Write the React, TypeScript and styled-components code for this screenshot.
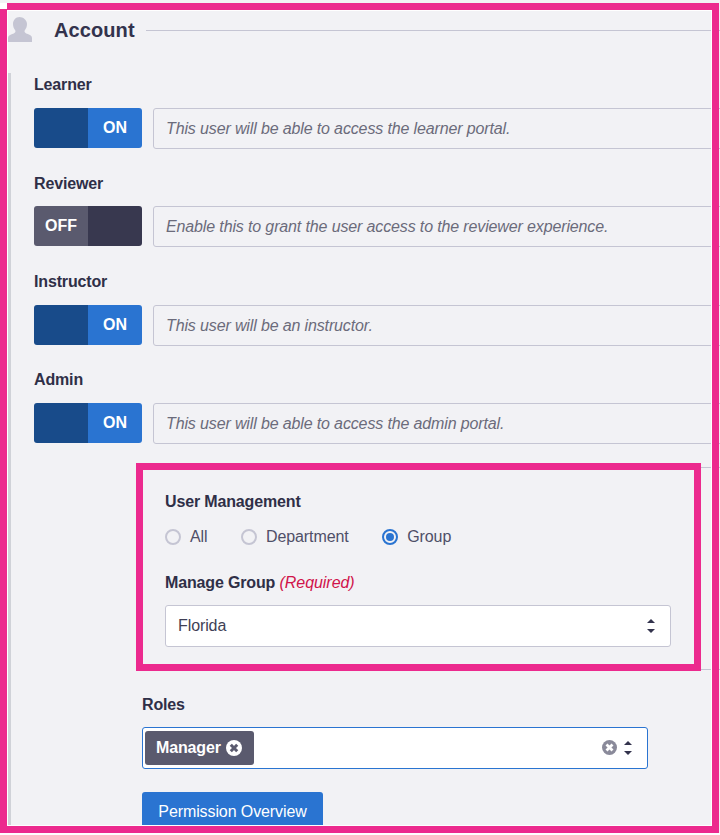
import styled, { createGlobalStyle } from "styled-components";

const GlobalStyle = createGlobalStyle`
  html, body {
    margin: 0;
    padding: 0;
    background: #fff;
    font-family: "Liberation Sans", Arial, sans-serif;
  }
`;

const Page = styled.div`
  position: relative;
  box-sizing: border-box;
  width: 720px;
  height: 833px;
  overflow: hidden;
  display: flex;
  flex-direction: column;
  padding: 17px 0 0 8px;
  background: #f2f2f5;
  font-size: 16px;
  color: #2f2f47;
`;

const SectionHeader = styled.div`
  display: flex;
  align-items: center;
  height: 27px;
  flex-shrink: 0;
`;

const UserIcon = styled.svg`
  width: 24px;
  height: 25px;
  align-self: flex-start;
  fill: #c5c5d3;
`;

const SectionTitle = styled.h2`
  margin: 0 11px 0 22px;
  font-size: 20px;
  line-height: 27px;
  font-weight: 700;
  letter-spacing: 0.1px;
  color: #33334d;
`;

const HeaderRule = styled.div`
  flex: 1;
  height: 1px;
  background: #c5c5d3;
`;

const Section = styled.div`
  flex: 1;
  margin-top: 29px;
  padding: 1.2px 0 0 23px;
  border-left: 3px solid #d0d2d8;
`;

const Label = styled.div`
  font-size: 16px;
  line-height: 22px;
  font-weight: 700;
  letter-spacing: -0.15px;
  color: #2f2f47;
  margin-bottom: 11.8px;
`;

const Required = styled.span`
  font-weight: 400;
  font-style: italic;
  letter-spacing: -0.05px;
  color: #d0134a;
`;

const FieldRow = styled.div`
  display: flex;
  gap: 11px;
  height: 41px;
  margin: 0 -10px 23.53px 0;
`;

const Toggle = styled.div`
  display: grid;
  grid-template-columns: 54px 54px;
  height: 40px;
  flex-shrink: 0;
  border-radius: 3px;
  overflow: hidden;
`;

const ToggleSide = styled.div<{ $color: string }>`
  display: flex;
  align-items: center;
  justify-content: center;
  background: ${(p) => p.$color};
  color: #fff;
  font-weight: 700;
  font-size: 16px;
`;

const Hint = styled.div`
  flex: 1;
  display: flex;
  align-items: center;
  box-sizing: border-box;
  padding: 0.8px 12px 0;
  border: 1px solid #c5c5d3;
  border-radius: 3px;
  font-style: italic;
  letter-spacing: -0.135px;
  color: #6b6b7b;
`;

const Panel = styled.div`
  margin: -0.53px -10px 0 108px;
  padding: 23px 0 22px 23px;
  border-top: 1px solid #c5c5d3;
  border-bottom: 1px solid #c5c5d3;
`;

const RadioGroup = styled.div`
  display: flex;
  align-items: center;
  gap: 33.4px;
  height: 22px;
  margin: 13px 0 24px;
`;

const RadioOption = styled.label`
  display: flex;
  align-items: center;
  gap: 9px;
  letter-spacing: -0.08px;
  color: #4f4f68;
`;

const RadioMark = styled.span<{ $checked?: boolean }>`
  display: flex;
  align-items: center;
  justify-content: center;
  box-sizing: border-box;
  width: 16px;
  height: 16px;
  border-radius: 50%;
  border: 2px solid ${(p) => (p.$checked ? "#2a74d1" : "#c5c5d3")};

  &::after {
    content: "";
    display: ${(p) => (p.$checked ? "block" : "none")};
    width: 8px;
    height: 8px;
    border-radius: 50%;
    background: #2a74d1;
  }
`;

const SelectBox = styled.div`
  display: flex;
  align-items: center;
  justify-content: space-between;
  box-sizing: border-box;
  width: 506px;
  height: 42px;
  margin-top: -0.8px;
  padding: 0 15px 0 12px;
  background: #fff;
  border: 1px solid #c5c5d3;
  border-radius: 3px;
  letter-spacing: -0.1px;
  color: #3f3f55;
`;

const RolesField = styled.div`
  margin: 24px 0 0 108px;
`;

const MultiBox = styled.div`
  display: flex;
  align-items: center;
  justify-content: space-between;
  box-sizing: border-box;
  width: 506px;
  height: 42px;
  margin-top: -0.8px;
  padding: 0 15px 0 2px;
  background: #fff;
  border: 1px solid #2a74d1;
  border-radius: 3px;
`;

const Chip = styled.div`
  display: flex;
  align-items: center;
  gap: 5px;
  height: 34px;
  padding: 0 12px 0 11px;
  background: #5a5a6e;
  border-radius: 3px;
  color: #fff;
  font-weight: 700;
  letter-spacing: -0.15px;
`;

const MultiControls = styled.div`
  display: flex;
  align-items: center;
  gap: 7px;
`;

const Chevrons = styled.svg`
  display: block;
  width: 8px;
  height: 14px;
  fill: #33334d;
`;

const Button = styled.button`
  display: block;
  box-sizing: border-box;
  width: 181px;
  height: 40px;
  margin-top: 23px;
  padding: 0;
  border: 0;
  border-radius: 3px;
  background: #2a74d1;
  color: #fff;
  font: 400 16px "Liberation Sans", Arial, sans-serif;
  letter-spacing: -0.1px;
`;

const Highlight = styled.div`
  position: absolute;
  box-sizing: border-box;
  border: 7px solid #ec2a8e;
  pointer-events: none;
`;

const OuterHighlight = styled(Highlight)`
  left: 0;
  top: 3px;
  width: 719px;
  height: 830px;
  box-shadow: inset 0 0 0 1px #fff;

  &::before {
    content: "";
    position: absolute;
    left: -7px;
    top: -7px;
    width: 7px;
    height: 6px;
    background: #fff;
  }
`;

const InnerHighlight = styled(Highlight)`
  left: 136px;
  top: 463px;
  width: 565px;
  height: 208px;
`;

const ClearIcon = ({ fill, stroke, size }: { fill: string; stroke: string; size: number }) => (
  <svg width={size} height={size} viewBox="0 0 16 16" style={{ display: "block" }}>
    <circle cx="8" cy="8" r="8" fill={fill} />
    <path d="M4.8 4.8l6.4 6.4M11.2 4.8l-6.4 6.4" stroke={stroke} strokeWidth="3" fill="none" />
  </svg>
);

const UpDown = () => (
  <Chevrons viewBox="0 0 8 14">
    <polygon points="4,0 8,4 0,4" />
    <polygon points="0,10 8,10 4,14" />
  </Chevrons>
);

const roles = [
  { name: "Learner", on: true, hint: "This user will be able to access the learner portal." },
  { name: "Reviewer", on: false, hint: "Enable this to grant the user access to the reviewer experience." },
  { name: "Instructor", on: true, hint: "This user will be an instructor." },
  { name: "Admin", on: true, hint: "This user will be able to access the admin portal." },
];

export default function App() {
  return (
    <>
      <GlobalStyle />
      <Page>
        <SectionHeader>
          <UserIcon viewBox="0 0 24 25">
            <path d="M11.5 0C8 0 5 2.8 5 7c0 2.6.9 4.6 2 6 .5.6.6 1.6.2 2.3-.5.8-1.6 1.3-3 1.8C2 18 0 18.8 0 21v4h24v-4c0-2.2-2-3-4.2-3.9-1.4-.5-2.5-1-3-1.8-.4-.7-.3-1.7.2-2.3 1.1-1.4 2-3.4 2-6C19 2.8 15 0 11.5 0z" />
          </UserIcon>
          <SectionTitle>Account</SectionTitle>
          <HeaderRule />
        </SectionHeader>
        <Section>
          {roles.map((role) => (
            <div key={role.name}>
              <Label>{role.name}</Label>
              <FieldRow>
                <Toggle>
                  <ToggleSide $color={role.on ? "#184b8a" : "#5a5a6e"}>{role.on ? "" : "OFF"}</ToggleSide>
                  <ToggleSide $color={role.on ? "#2a74d1" : "#38384f"}>{role.on ? "ON" : ""}</ToggleSide>
                </Toggle>
                <Hint>{role.hint}</Hint>
              </FieldRow>
            </div>
          ))}
          <Panel>
            <Label>User Management</Label>
            <RadioGroup>
              <RadioOption><RadioMark />All</RadioOption>
              <RadioOption><RadioMark />Department</RadioOption>
              <RadioOption><RadioMark $checked />Group</RadioOption>
            </RadioGroup>
            <Label>
              Manage Group <Required>(Required)</Required>
            </Label>
            <SelectBox>
              Florida
              <UpDown />
            </SelectBox>
          </Panel>
          <RolesField>
            <Label>Roles</Label>
            <MultiBox>
              <Chip>
                Manager
                <ClearIcon fill="#fff" stroke="#5a5a6e" size={16} />
              </Chip>
              <MultiControls>
                <ClearIcon fill="#8a8a9a" stroke="#fff" size={15} />
                <UpDown />
              </MultiControls>
            </MultiBox>
            <Button>Permission Overview</Button>
          </RolesField>
        </Section>
        <OuterHighlight />
        <InnerHighlight />
      </Page>
    </>
  );
}
